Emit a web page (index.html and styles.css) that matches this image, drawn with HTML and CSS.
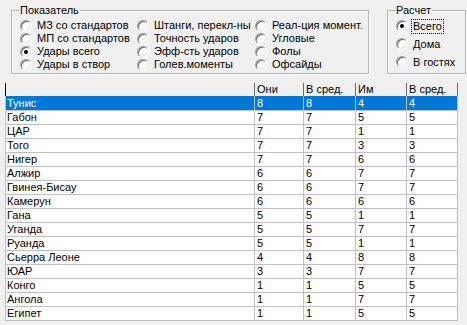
FILE: index.html
```html
<!DOCTYPE html>
<html lang="ru">
<head>
    <meta charset="UTF-8">
    <title>Показатели</title>
    <link rel="stylesheet" href="styles.css">
</head>
<body>

<!-- Filters -->
<div class="top">
    <fieldset class="group group-main">
        <legend>Показатель</legend>
        <div class="opts">
            <label class="opt"><span class="radio"></span><span class="txt">МЗ со стандартов</span></label>
            <label class="opt"><span class="radio"></span><span class="txt">МП со стандартов</span></label>
            <label class="opt"><span class="radio on"></span><span class="txt">Удары всего</span></label>
            <label class="opt"><span class="radio"></span><span class="txt">Удары в створ</span></label>
            <label class="opt"><span class="radio"></span><span class="txt">Штанги, перекл-ны</span></label>
            <label class="opt"><span class="radio"></span><span class="txt">Точность ударов</span></label>
            <label class="opt"><span class="radio"></span><span class="txt">Эфф-сть ударов</span></label>
            <label class="opt"><span class="radio"></span><span class="txt">Голев.моменты</span></label>
            <label class="opt"><span class="radio"></span><span class="txt">Реал-ция момент.</span></label>
            <label class="opt"><span class="radio"></span><span class="txt">Угловые</span></label>
            <label class="opt"><span class="radio"></span><span class="txt">Фолы</span></label>
            <label class="opt"><span class="radio"></span><span class="txt">Офсайды</span></label>
        </div>
    </fieldset>

    <fieldset class="group group-calc">
        <legend>Расчет</legend>
        <label class="opt"><span class="radio on"></span><span class="txt focus">Всего</span></label>
        <label class="opt"><span class="radio"></span><span class="txt">Дома</span></label>
        <label class="opt"><span class="radio"></span><span class="txt">В гостях</span></label>
    </fieldset>
</div>

<!-- Table -->
<div class="grid" id="grid">
    <div class="row head">
        <div class="cell"></div>
        <div class="cell">Они</div>
        <div class="cell">В сред.</div>
        <div class="cell">Им</div>
        <div class="cell">В сред.</div>
    </div>
</div>

<script>
    const teams = [
        ['Тунис', 8, 8, 4, 4],
        ['Габон', 7, 7, 5, 5],
        ['ЦАР', 7, 7, 1, 1],
        ['Того', 7, 7, 3, 3],
        ['Нигер', 7, 7, 6, 6],
        ['Алжир', 6, 6, 7, 7],
        ['Гвинея-Бисау', 6, 6, 7, 7],
        ['Камерун', 6, 6, 6, 6],
        ['Гана', 5, 5, 1, 1],
        ['Уганда', 5, 5, 7, 7],
        ['Руанда', 5, 5, 1, 1],
        ['Сьерра Леоне', 4, 4, 8, 8],
        ['ЮАР', 3, 3, 7, 7],
        ['Конго', 1, 1, 5, 5],
        ['Ангола', 1, 1, 7, 7],
        ['Египет', 1, 1, 5, 5]
    ];

    const grid = document.getElementById('grid');
    teams.forEach((t, i) => {
        const row = document.createElement('div');
        row.className = i === 0 ? 'row sel' : 'row';
        t.forEach(v => {
            const cell = document.createElement('div');
            cell.className = 'cell';
            cell.textContent = v;
            row.appendChild(cell);
        });
        grid.appendChild(row);
    });
</script>

</body>
</html>
```

FILE: styles.css
```css
/* General styling */
body {
    margin: 0;
    background-color: #f0f0f0;
    font-family: "Liberation Sans", Arial, sans-serif;
    font-size: 11px;
    color: #000;
}

/* Group boxes */
.top {
    display: flex;
    align-items: flex-start;
    padding: 4px 0 0 11px;
    height: 83px;
    box-sizing: border-box;
}

.group {
    margin: 0;
    min-width: 0;
    flex: none;
    box-sizing: border-box;
    border: 1px solid #b4b4b4;
    box-shadow: 1px 1px 0 #fff, inset 1px 1px 0 #fff;
    height: 70px;
    padding: 0 0 0 8px;
    overflow: visible;
}

.group legend {
    padding: 0 1px;
    margin-left: -1px;
    line-height: 13px;
}

.group-main {
    width: 358px;
}

.group-calc {
    width: 79px;
    margin-left: 18px;
}

.opts {
    display: grid;
    grid-template-rows: repeat(4, 13px);
    grid-template-columns: 117px 118px 1fr;
    grid-auto-flow: column;
    padding-top: 2px;
}

.opt {
    display: flex;
    align-items: center;
    white-space: nowrap;
    line-height: 13px;
    min-width: 0;
}

.group-calc .opt {
    height: 18px;
}

/* Radio buttons */
.radio {
    position: relative;
    flex: none;
    width: 10px;
    height: 10px;
    border-radius: 50%;
    background: #fff;
    border: 1px solid;
    border-color: #a0a0a0 #fff #fff #a0a0a0;
    box-shadow: inset 1px 1px 0 #696969, inset -1px -1px 0 #e3e3e3;
}

.radio.on::after {
    content: "";
    position: absolute;
    left: 3px;
    top: 3px;
    width: 4px;
    height: 4px;
    border-radius: 50%;
    background: #000;
}

.txt {
    margin-left: 3px;
    padding: 0 1px;
    border: 1px solid transparent;
}

.txt.focus {
    border: 1px dotted #000;
}

/* Grid */
.grid {
    margin-left: 5px;
    width: 453px;
}

.row {
    display: grid;
    grid-template-columns: 249px 49px 52px 51px 51px;
    border-left: 1px solid #c0c0c0;
    background: #fff;
}

.cell {
    height: 13px;
    line-height: 13px;
    padding-left: 2px;
    border-right: 1px solid #c0c0c0;
    border-bottom: 1px solid #c0c0c0;
    white-space: nowrap;
    overflow: hidden;
}

.row .cell:first-child {
    padding-left: 1px;
}

.row.head {
    background: #f0f0f0;
    border-left-color: #000;
}

.row.head .cell {
    border-bottom: none;
    border-right-color: #6d6d6d;
}

.row.sel {
    background: #0078d7;
    color: #fff;
}

.row.sel .cell {
    height: 14px;
    line-height: 15px;
}
```
